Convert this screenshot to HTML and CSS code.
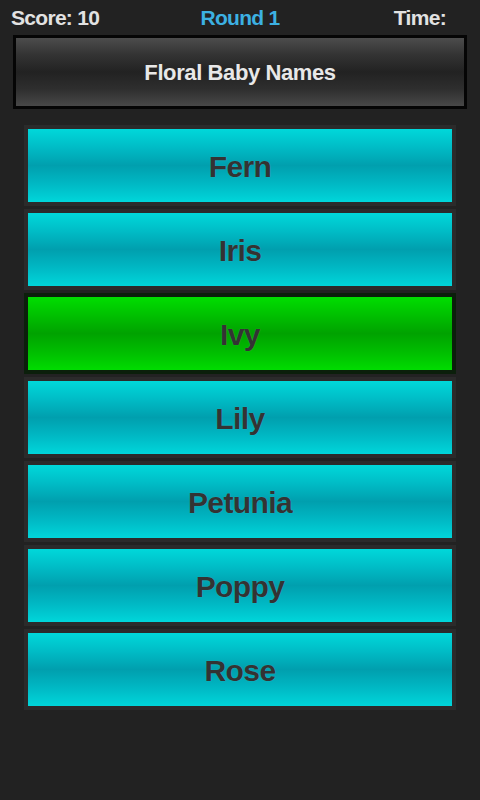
FILE: index.html
```html
<!DOCTYPE html>
<html>
<head>
<meta charset="utf-8">
<link rel="stylesheet" href="styles.css">
</head>
<body>
<div class="screen">
  <div class="header">
    <span class="score">Score: 10</span>
    <span class="round">Round 1</span>
    <span class="time">Time:</span>
  </div>
  <div class="title">Floral Baby Names</div>
  <div class="choices">
    <div class="choice"><span>Fern</span></div>
    <div class="choice"><span>Iris</span></div>
    <div class="choice correct"><span>Ivy</span></div>
    <div class="choice"><span>Lily</span></div>
    <div class="choice"><span>Petunia</span></div>
    <div class="choice"><span>Poppy</span></div>
    <div class="choice"><span>Rose</span></div>
  </div>
</div>
</body>
</html>
```
FILE: styles.css
```css
html, body {
  margin: 0;
  padding: 0;
  background: #222222;
}
.screen {
  width: 480px;
  height: 800px;
  background: #222222;
  font-family: "Liberation Sans", Arial, sans-serif;
  font-weight: bold;
  overflow: hidden;
}
.header {
  display: grid;
  grid-template-columns: 1fr auto 1fr;
  padding: 6px 11px 0 11px;
  height: 29px;
  font-size: 21px;
  line-height: 24px;
  letter-spacing: -0.7px;
  color: #e2e2e2;
}
.score { justify-self: start; }
.round { color: #3cb1e2; }
.time { justify-self: end; margin-right: 23px; }
.title {
  margin: 0 13px;
  height: 74px;
  box-sizing: border-box;
  border: 3px solid #050505;
  background: linear-gradient(to bottom, #4c4c4c 0%, #333333 25%, #222222 50%, #2e2e2e 75%, #484848 100%);
  display: flex;
  align-items: center;
  justify-content: center;
  color: #e8e8e8;
  font-size: 22px;
  letter-spacing: -0.4px;
  padding-top: 1px;
}
.choices {
  margin: 16px 24px 0 24px;
  display: flex;
  flex-direction: column;
  gap: 3px;
}
.choice {
  height: 81px;
  box-sizing: border-box;
  border: 4px solid #2b2b2b;
  background: linear-gradient(to bottom, #00d8da 0%, #00bcc6 25%, #009fae 50%, #00b8c4 75%, #00d6da 100%);
  display: flex;
  align-items: center;
  justify-content: center;
  color: #333333;
  font-size: 30px;
  letter-spacing: -0.6px;
  padding-top: 3px;
  text-shadow: 0 0 1px rgba(255, 255, 255, 0.25);
}
.choice.correct {
  border-color: #0b1f0b;
  background: linear-gradient(to bottom, #00de00 0%, #00c000 25%, #00a200 50%, #00bd00 75%, #00dc00 100%);
}
```
